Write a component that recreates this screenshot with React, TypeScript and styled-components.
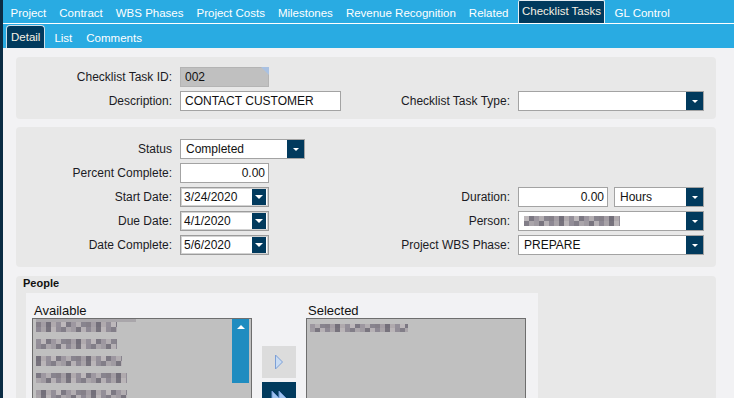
import React from "react";
import styled, { createGlobalStyle, css } from "styled-components";

const NAVY = "#013a5d";
const BLUE = "#29abe2";

const GlobalStyle = createGlobalStyle`
  html, body { margin: 0; padding: 0; overflow: hidden; background: #f2f2f4; }
  body { font-family: "Liberation Sans", Arial, sans-serif; font-size: 12px; color: #1b1b24; }
  * { box-sizing: border-box; }
`;

const Frame = styled.div`
  width: 734px;
  height: 398px;
  overflow: hidden;
  border-left: 3px solid #0b2c44;
  display: flex;
  flex-direction: column;
  background: #f2f2f4;
`;

const TopBar = styled.nav`
  height: 24px;
  flex: none;
  background: ${BLUE};
  border-bottom: 1px solid #ffffff;
  display: flex;
  align-items: stretch;
  padding-left: 1px;
`;

const TopTab = styled.div<{ $active?: boolean }>`
  display: flex;
  align-items: center;
  padding: 2px 6.5px 0;
  color: #ffffff;
  font-size: 11.5px;
  white-space: nowrap;
  ${(p) =>
    p.$active &&
    css`
      background: ${NAVY};
      margin: 0 3px;
      padding: 0 3px 2px;
      border: 1px solid #e6eef3;
      border-bottom: none;
      border-radius: 2px 2px 0 0;
      color: #f6f1e4;
    `}
`;

const SubBar = styled.nav`
  height: 24px;
  flex: none;
  background: ${BLUE};
  display: flex;
  align-items: stretch;
  padding-left: 3px;
`;

const SubTab = styled.div<{ $active?: boolean }>`
  display: flex;
  align-items: center;
  padding: 4px 7px 0;
  color: #ffffff;
  font-size: 11.5px;
  white-space: nowrap;
  ${(p) =>
    p.$active &&
    css`
      align-self: flex-end;
      height: 23px;
      margin-right: 2px;
      padding: 0 4px 1px;
      background: ${NAVY};
      border: 1px solid #cfe0ea;
      border-bottom: none;
      border-radius: 4px 4px 0 0;
      color: #f6f1e4;
    `}
`;

const Content = styled.main`
  flex: 1;
  display: flex;
  flex-direction: column;
  gap: 8px;
  padding: 9px 18px 0 13px;
`;

const Panel = styled.section<{ $padY: number; $padBottom: number }>`
  background: #e8e8e8;
  border-radius: 4px;
  display: grid;
  grid-template-columns: 156px 170px 152px 186px;
  grid-auto-rows: 20px;
  column-gap: 8px;
  row-gap: 4px;
  padding: ${(p) => p.$padY}px 12px ${(p) => p.$padBottom}px 0;
`;

const Spacer = styled.div<{ $span: number }>`
  grid-column: span ${(p) => p.$span};
`;

const Label = styled.div`
  justify-self: end;
  align-self: center;
  white-space: nowrap;
  color: #1b1b24;
  font-size: 12px;
  line-height: 14px;
`;

const FieldRow = styled.div`
  display: flex;
  gap: 6px;
  align-items: stretch;
`;

const TextBox = styled.div<{ $w: number; $right?: boolean; $readOnly?: boolean }>`
  position: relative;
  width: ${(p) => p.$w}px;
  height: 20px;
  border: 1px solid ${(p) => (p.$readOnly ? "#b4b4b4" : "#a3a3a3")};
  background: ${(p) => (p.$readOnly ? "#c0c0c0" : "#ffffff")};
  display: flex;
  align-items: center;
  justify-content: ${(p) => (p.$right ? "flex-end" : "flex-start")};
  padding: 0 ${(p) => (p.$right ? 3 : 4)}px 0 4px;
  color: #111;
  font-size: 12px;
  white-space: nowrap;
  ${(p) =>
    p.$readOnly &&
    css`
      &::after {
        content: "";
        position: absolute;
        top: -1px;
        right: -1px;
        border-top: 8px solid #a9c1e2;
        border-left: 8px solid transparent;
      }
    `}
`;

const SelectBox = styled.div<{ $w: number; $date?: boolean }>`
  width: ${(p) => p.$w}px;
  height: 20px;
  border: 1px solid #a3a3a3;
  background: #ffffff;
  display: flex;
  align-items: stretch;
  ${(p) =>
    p.$date &&
    css`
      border-color: #9c9c9c;
      box-shadow: inset 0 0 0 1px #d2d2d2;
    `}
`;

const SelectValue = styled.div<{ $date?: boolean }>`
  flex: 1;
  display: flex;
  align-items: center;
  padding-left: ${(p) => (p.$date ? 3 : 5)}px;
  color: #111;
  font-size: 12px;
  white-space: nowrap;
  overflow: hidden;
`;

const DropButton = styled.div<{ $date?: boolean }>`
  flex: none;
  width: ${(p) => (p.$date ? 14 : 17)}px;
  margin: ${(p) => (p.$date ? "1px 2px 1px 0" : "0")};
  background: ${NAVY};
  display: flex;
  align-items: center;
  justify-content: center;
`;

const Caret = styled.span<{ $big?: boolean }>`
  width: 0;
  height: 0;
  border-left: ${(p) => (p.$big ? 4 : 3)}px solid transparent;
  border-right: ${(p) => (p.$big ? 4 : 3)}px solid transparent;
  border-top: ${(p) => (p.$big ? 4 : 3)}px solid #ffffff;
`;

const MOSAIC_A = [
  "#858089", "#a39da4", "#736f7a", "#b0aaae", "#948f99", "#bdb8bb", "#7c7883", "#9d97a0", "#b3aeb2", "#88848e",
];
const MOSAIC_B = [
  "#a09ba2", "#79757f", "#b6b1b5", "#8d8893", "#a8a3a8", "#77737d", "#bab5b8", "#928d97", "#827e88", "#aba6ab",
];

function stripes(colors: string[], offset: number) {
  const parts: string[] = [];
  for (let i = 0; i < colors.length; i++) {
    const c = colors[(i + offset) % colors.length];
    parts.push(`${c} ${i * 5}px ${(i + 1) * 5}px`);
  }
  return `repeating-linear-gradient(90deg, ${parts.join(", ")})`;
}

const Mosaic = styled.span<{ $w: number; $h: number; $seed: number }>`
  display: block;
  flex: none;
  width: ${(p) => p.$w}px;
  height: ${(p) => p.$h}px;
  background-image: ${(p) => stripes(MOSAIC_A, p.$seed)}, ${(p) => stripes(MOSAIC_B, p.$seed + 3)};
  background-size: 100% 50%, 100% 50%;
  background-position: top left, bottom left;
  background-repeat: no-repeat;
`;

const PeoplePanel = styled.section`
  flex: 1;
  margin-top: 1px;
  background: #e8e8e8;
  border-radius: 4px 4px 0 0;
  display: flex;
  flex-direction: column;
  padding-left: 10px;
`;

const PeopleTitle = styled.div`
  height: 17px;
  margin-left: -3px;
  font-size: 11px;
  font-weight: bold;
  line-height: 14px;
  color: #111;
`;

const Picker = styled.div`
  width: 512px;
  flex: 1;
  background: #f2f2f4;
  padding: 10px 12px 0 6px;
  display: grid;
  grid-template-columns: 220px 34px 220px;
  grid-template-rows: 15px auto;
  column-gap: 10px;
`;

const ColLabel = styled.div`
  padding-left: 2px;
  font-size: 13px;
  line-height: 15px;
  color: #111;
`;

const ListBox = styled.div`
  height: 120px;
  border: 1px solid #6e6e6e;
  background: #c0c0c0;
  display: flex;
`;

const ListItems = styled.div<{ $top: number }>`
  flex: 1;
  display: flex;
  flex-direction: column;
  padding: ${(p) => p.$top}px 0 0 3px;
`;

const ListItem = styled.div`
  height: 17px;
  flex: none;
`;

const ScrollTrack = styled.div`
  width: 17px;
  margin-right: 2px;
  flex: none;
`;

const ScrollThumb = styled.div`
  height: 64px;
  background: #1f8cc0;
  display: flex;
  justify-content: center;
  padding-top: 6px;
`;

const UpCaret = styled.span`
  width: 0;
  height: 0;
  border-left: 4px solid transparent;
  border-right: 4px solid transparent;
  border-bottom: 4px solid #ffffff;
`;

const MoveColumn = styled.div`
  display: flex;
  flex-direction: column;
  gap: 4px;
  padding-top: 28px;
`;

const MoveButton = styled.div<{ $dark?: boolean }>`
  width: 34px;
  height: 32px;
  background: ${(p) => (p.$dark ? NAVY : "#dcdcdc")};
  display: flex;
  align-items: center;
  justify-content: center;
`;

const TopStrip = styled.div`
  height: 3px;
  width: 100px;
  margin-top: -3px;
  background: #a9a6aa;
`;

type Sel = { w: number; value: React.ReactNode };

function Select({ w, value }: Sel) {
  return (
    <SelectBox $w={w}>
      <SelectValue>{value}</SelectValue>
      <DropButton>
        <Caret />
      </DropButton>
    </SelectBox>
  );
}

function DateBox({ value }: { value: string }) {
  return (
    <SelectBox $w={89} $date>
      <SelectValue $date>{value}</SelectValue>
      <DropButton $date>
        <Caret $big />
      </DropButton>
    </SelectBox>
  );
}

const TOP_TABS = [
  "Project",
  "Contract",
  "WBS Phases",
  "Project Costs",
  "Milestones",
  "Revenue Recognition",
  "Related",
  "Checklist Tasks",
  "GL Control",
];

const AVAILABLE = [
  { w: 81, seed: 0 },
  { w: 81, seed: 4 },
  { w: 86, seed: 2 },
  { w: 91, seed: 6 },
  { w: 91, seed: 1 },
];

export default function App() {
  return (
    <>
      <GlobalStyle />
      <Frame>
        <TopBar>
          {TOP_TABS.map((t) => (
            <TopTab key={t} $active={t === "Checklist Tasks"}>
              {t}
            </TopTab>
          ))}
        </TopBar>
        <SubBar>
          <SubTab $active>Detail</SubTab>
          <SubTab>List</SubTab>
          <SubTab>Comments</SubTab>
        </SubBar>
        <Content>
          <Panel $padY={10} $padBottom={8}>
            <Label>Checklist Task ID:</Label>
            <div>
              <TextBox $w={89} $readOnly>
                002
              </TextBox>
            </div>
            <Spacer $span={2} />
            <Label>Description:</Label>
            <div>
              <TextBox $w={161}>CONTACT CUSTOMER</TextBox>
            </div>
            <Label>Checklist Task Type:</Label>
            <Select w={186} value="" />
          </Panel>

          <Panel $padY={12} $padBottom={12}>
            <Label>Status</Label>
            <div>
              <Select w={125} value="Completed" />
            </div>
            <Spacer $span={2} />

            <Label>Percent Complete:</Label>
            <div>
              <TextBox $w={89} $right>
                0.00
              </TextBox>
            </div>
            <Spacer $span={2} />

            <Label>Start Date:</Label>
            <div>
              <DateBox value="3/24/2020" />
            </div>
            <Label>Duration:</Label>
            <FieldRow>
              <TextBox $w={90} $right>
                0.00
              </TextBox>
              <Select w={90} value="Hours" />
            </FieldRow>

            <Label>Due Date:</Label>
            <div>
              <DateBox value="4/1/2020" />
            </div>
            <Label>Person:</Label>
            <Select w={186} value={<Mosaic $w={96} $h={10} $seed={5} />} />

            <Label>Date Complete:</Label>
            <div>
              <DateBox value="5/6/2020" />
            </div>
            <Label>Project WBS Phase:</Label>
            <Select w={186} value="PREPARE" />
          </Panel>

          <PeoplePanel>
            <PeopleTitle>People</PeopleTitle>
            <Picker>
              <ColLabel>Available</ColLabel>
              <div />
              <ColLabel>Selected</ColLabel>

              <ListBox>
                <ListItems $top={3}>
                  <TopStrip />
                  {AVAILABLE.map((it, i) => (
                    <ListItem key={i}>
                      <Mosaic $w={it.w} $h={10} $seed={it.seed} />
                    </ListItem>
                  ))}
                </ListItems>
                <ScrollTrack>
                  <ScrollThumb>
                    <UpCaret />
                  </ScrollThumb>
                </ScrollTrack>
              </ListBox>

              <MoveColumn>
                <MoveButton>
                  <svg width="10" height="16" viewBox="0 0 10 16">
                    <path d="M1.5 1 L8.5 8 L1.5 15 Z" fill="#c9dcf3" stroke="#7c9fd6" strokeWidth="1" />
                  </svg>
                </MoveButton>
                <MoveButton $dark>
                  <svg width="16" height="16" viewBox="0 0 16 16">
                    <path d="M1 1 L8 8 L1 15 Z" fill="#9ec2ee" stroke="#6f97d4" strokeWidth="1" />
                    <path d="M8 1 L15 8 L8 15 Z" fill="#9ec2ee" stroke="#6f97d4" strokeWidth="1" />
                  </svg>
                </MoveButton>
              </MoveColumn>

              <ListBox>
                <ListItems $top={5}>
                  <ListItem>
                    <Mosaic $w={98} $h={8} $seed={7} />
                  </ListItem>
                </ListItems>
              </ListBox>
            </Picker>
          </PeoplePanel>
        </Content>
      </Frame>
    </>
  );
}
